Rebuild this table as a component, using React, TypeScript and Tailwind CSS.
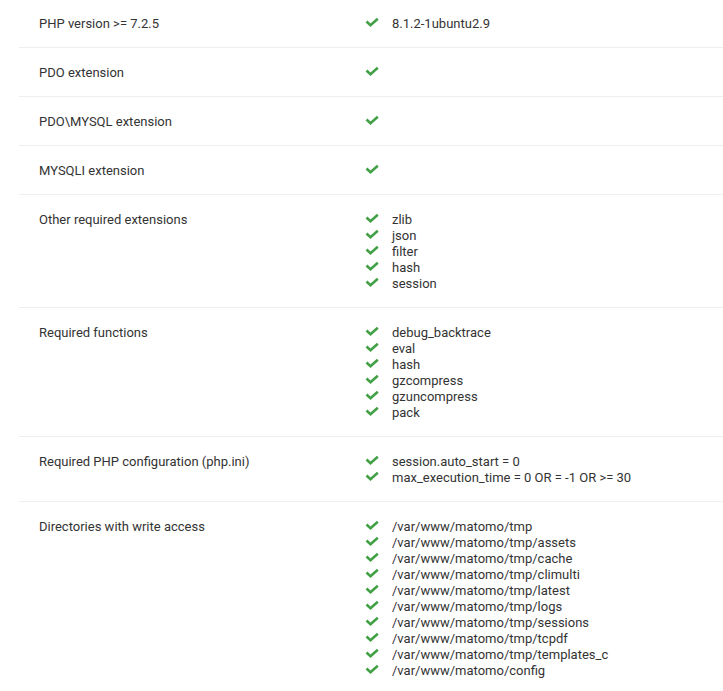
const rows: { label: string; items: string[] }[] = [
  { label: 'PHP version >= 7.2.5', items: ['8.1.2-1ubuntu2.9'] },
  { label: 'PDO extension', items: [''] },
  { label: 'PDO\\MYSQL extension', items: [''] },
  { label: 'MYSQLI extension', items: [''] },
  { label: 'Other required extensions', items: ['zlib', 'json', 'filter', 'hash', 'session'] },
  {
    label: 'Required functions',
    items: ['debug_backtrace', 'eval', 'hash', 'gzcompress', 'gzuncompress', 'pack'],
  },
  {
    label: 'Required PHP configuration (php.ini)',
    items: ['session.auto_start = 0', 'max_execution_time = 0 OR = -1 OR >= 30'],
  },
  {
    label: 'Directories with write access',
    items: [
      '/var/www/matomo/tmp',
      '/var/www/matomo/tmp/assets',
      '/var/www/matomo/tmp/cache',
      '/var/www/matomo/tmp/climulti',
      '/var/www/matomo/tmp/latest',
      '/var/www/matomo/tmp/logs',
      '/var/www/matomo/tmp/sessions',
      '/var/www/matomo/tmp/tcpdf',
      '/var/www/matomo/tmp/templates_c',
      '/var/www/matomo/config',
    ],
  },
]

function Check() {
  return (
    <svg width="14" height="16" viewBox="0 0 14 16" className="shrink-0">
      <polyline
        points="1.5,5.5 5.5,9.3 12.8,2.7"
        fill="none"
        stroke="#43a047"
        strokeWidth="2.6"
        strokeLinecap="butt"
        strokeLinejoin="miter"
      />
    </svg>
  )
}

export default function App() {
  return (
    <div
      className="min-h-screen bg-white pl-[19px] text-[13px] leading-4 text-[#333333] -mt-px overflow-hidden"
      style={{ fontFamily: 'Roboto, "Liberation Sans", sans-serif' }}
    >
      {rows.map((row) => (
        <div key={row.label} className="flex border-b border-[#eeeeee] pt-[17px] pb-[15px]">
          <div className="w-[346px] shrink-0 pl-5">{row.label}</div>
          <ul className="flex flex-col">
            {row.items.map((it, i) => (
              <li key={i} className="flex h-4 items-center">
                <Check />
                <span className="ml-[13px] whitespace-nowrap">{it}</span>
              </li>
            ))}
          </ul>
        </div>
      ))}
    </div>
  )
}
